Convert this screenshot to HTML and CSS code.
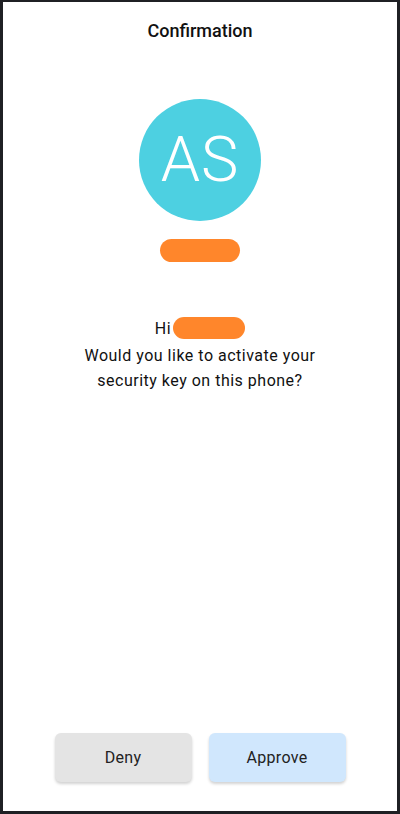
FILE: index.html
```html
<!DOCTYPE html>
<html>
<head>
<meta charset="utf-8">
<link rel="stylesheet" href="styles.css">
</head>
<body>
<div class="screen">
  <header class="title">Confirmation</header>
  <div class="avatar">AS</div>
  <div class="name-pill"></div>
  <div class="message">
    <div class="greeting">Hi<span class="greet-pill"></span></div>
    <p class="question">Would you like to activate your<br>security key on this phone?</p>
  </div>
  <div class="actions">
    <button class="btn btn-deny">Deny</button>
    <button class="btn btn-approve">Approve</button>
  </div>
</div>
</body>
</html>
```
FILE: styles.css
```css
html, body {
  margin: 0;
  padding: 0;
  background: #1f2024;
}
body {
  font-family: Roboto, "Noto Sans", sans-serif;
  color: #111;
}
.screen {
  box-sizing: border-box;
  width: 400px;
  height: 814px;
  border-style: solid;
  border-color: #1f2024;
  border-width: 2px 3px 3px 3px;
  background: #fff;
  display: flex;
  flex-direction: column;
  align-items: center;
}
.title {
  margin-top: 19px;
  font-size: 18px;
  font-weight: 500;
  line-height: 20px;
  color: #111;
}
.avatar {
  margin-top: 58px;
  width: 122px;
  height: 122px;
  border-radius: 50%;
  background: #4dd0e1;
  color: #fff;
  font-weight: 300;
  font-size: 63px;
  line-height: 122px;
  text-align: center;
  letter-spacing: 1px;
}
.name-pill {
  margin-top: 18px;
  width: 80px;
  height: 23px;
  border-radius: 12px;
  background: #ff862b;
}
.message {
  margin-top: 54px;
  text-align: center;
  font-size: 16px;
  line-height: 25px;
  letter-spacing: 0.5px;
  color: #111;
}
.greeting {
  display: flex;
  justify-content: center;
  align-items: center;
  height: 24px;
}
.greet-pill {
  display: inline-block;
  width: 72px;
  height: 22px;
  border-radius: 11px;
  background: #ff862b;
  margin-left: 2px;
}
.question {
  margin: 3px 0 0;
}
.actions {
  margin-top: auto;
  margin-bottom: 29px;
  display: flex;
  gap: 17px;
}
.btn {
  width: 137px;
  height: 49px;
  border: none;
  border-radius: 6px;
  font-family: Roboto, "Noto Sans", sans-serif;
  font-size: 16px;
  letter-spacing: 0.3px;
  color: #222;
  box-shadow: 0 2px 3px rgba(0,0,0,0.18);
  padding: 0;
}
.btn-deny {
  background: #e4e4e4;
}
.btn-approve {
  background: #d0e7fd;
}
```
